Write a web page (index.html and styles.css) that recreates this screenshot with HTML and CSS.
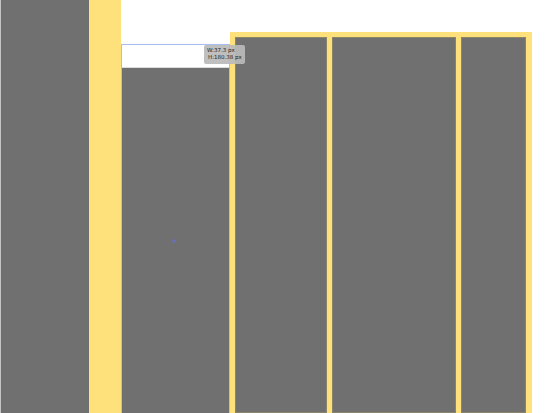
FILE: index.html
```html
<!DOCTYPE html>
<html>
<head>
<meta charset="utf-8">
<link rel="stylesheet" href="styles.css">
</head>
<body>
<div class="page">
  <div class="col-left"></div>
  <div class="col-yellow"></div>
  <div class="col-mid">
    <div class="selected">
      <div class="sel-head"></div>
      <div class="sel-body"></div>
    </div>
  </div>
  <div class="frame">
    <div class="cell cell-a"></div>
    <div class="cell cell-b"></div>
    <div class="cell cell-c"></div>
  </div>
  <div class="tooltip">
    <div>W:37.3 px</div>
    <div>H:180.38 px</div>
  </div>
  <div class="dot"></div>
</div>
</body>
</html>
```
FILE: styles.css
```css
html, body {
  margin: 0;
  padding: 0;
  background: #ffffff;
}
.page {
  position: relative;
  display: flex;
  width: 557px;
  height: 413px;
  overflow: hidden;
  font-family: "DejaVu Sans", "Liberation Sans", sans-serif;
}
.col-left {
  width: 88px;
  border-left: 1px solid #c4c4c4;
  background: #707070;
  flex: none;
}
.col-yellow {
  width: 32px;
  background: #ffe17b;
  flex: none;
}
.col-mid {
  width: 109px;
  flex: none;
  display: flex;
  flex-direction: column;
  padding-top: 44px;
  box-sizing: border-box;
}
.selected {
  flex: 1;
  display: flex;
  flex-direction: column;
  border: 1px solid #a9bdf5;
  border-bottom: none;
}
.sel-head {
  height: 22px;
  background: #ffffff;
  border-bottom: 1px solid #dcdcdc;
}
.sel-body {
  flex: 1;
  background: #707070;
}
.frame {
  width: 302px;
  flex: none;
  margin-top: 32px;
  background: #ffe17b;
  padding: 5px 6px 0 5px;
  box-sizing: border-box;
  display: flex;
  gap: 5px;
}
.cell {
  background: #707070;
  box-shadow: inset 0 0 0 1px #8a8468;
}
.cell-a { width: 92px; }
.cell-b { width: 124px; }
.cell-c { width: 65px; }
.tooltip {
  position: absolute;
  left: 204px;
  top: 45px;
  width: 41px;
  height: 19px;
  box-sizing: border-box;
  background: rgba(186, 186, 186, 0.92);
  border-radius: 2px;
  padding: 2px 0 0 3px;
  font-size: 5.5px;
  line-height: 7px;
  color: #222;
  white-space: nowrap;
}
.tooltip div:last-child {
  padding-left: 1px;
}
.dot {
  position: absolute;
  left: 172px;
  top: 239px;
  width: 4px;
  height: 4px;
  border-radius: 50%;
  background: #6b6fb0;
  filter: blur(0.5px);
}
```
